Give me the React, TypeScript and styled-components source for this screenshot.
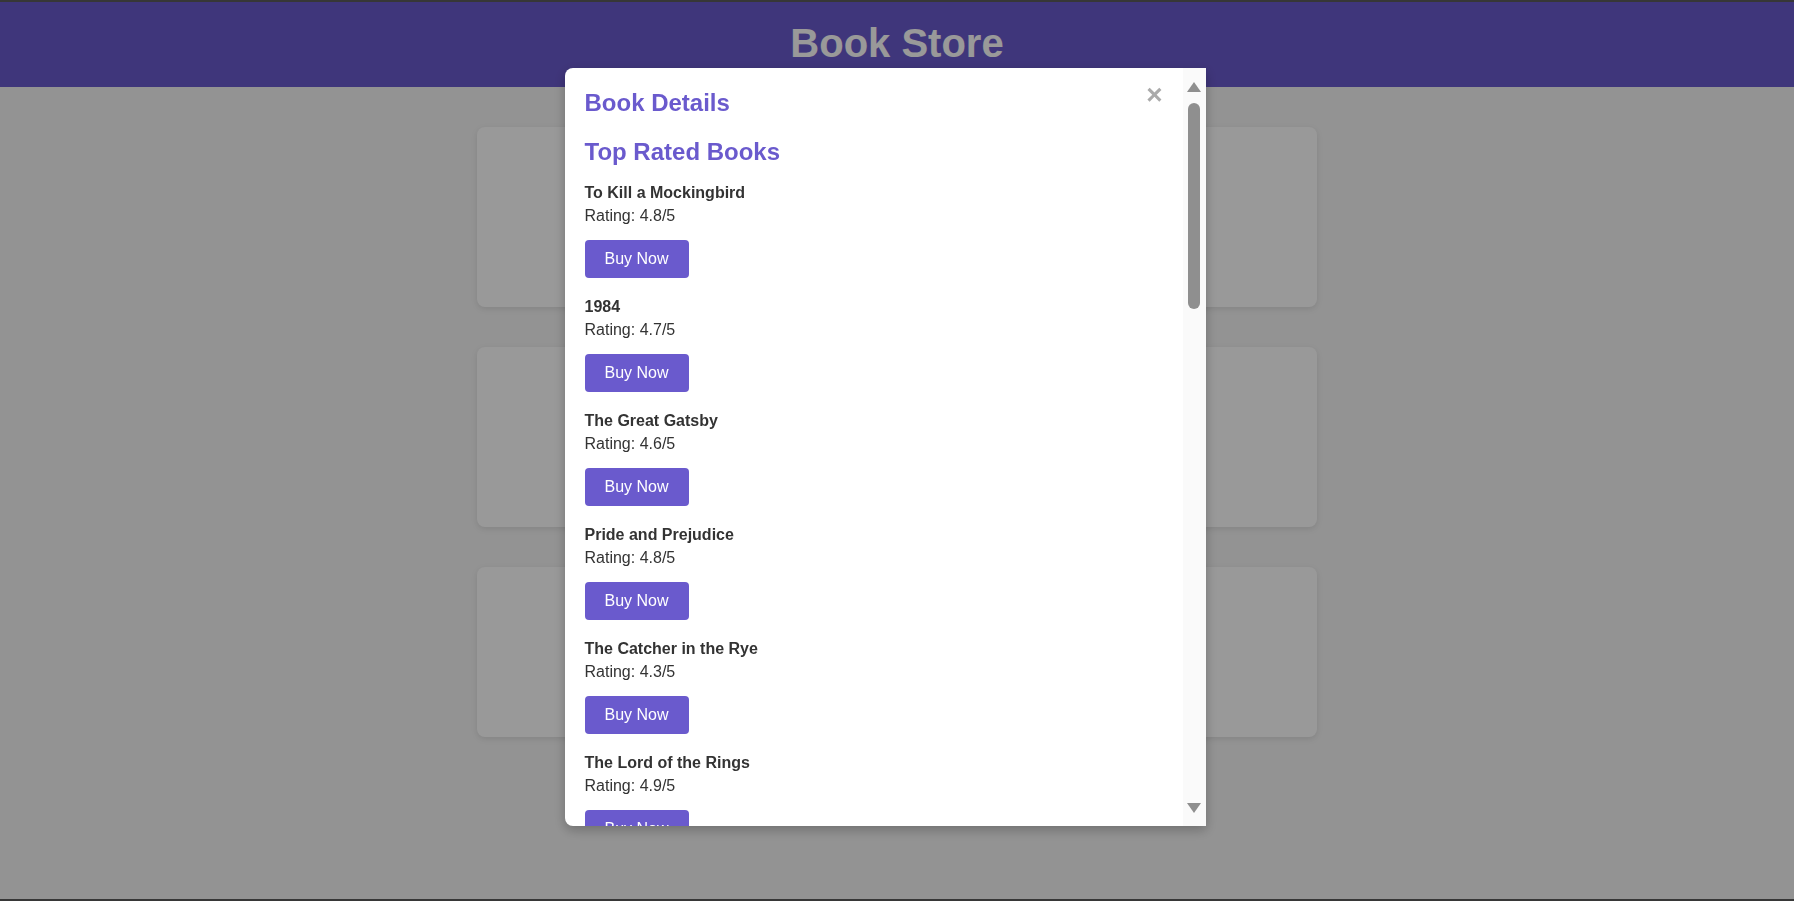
import styled, { createGlobalStyle } from 'styled-components'

type Book = {
  title: string
  rating: number
}

type Featured = {
  title: string
  author: string
  price: string
  compact?: boolean
}

const TOP_RATED: Book[] = [
  { title: 'To Kill a Mockingbird', rating: 4.8 },
  { title: '1984', rating: 4.7 },
  { title: 'The Great Gatsby', rating: 4.6 },
  { title: 'Pride and Prejudice', rating: 4.8 },
  { title: 'The Catcher in the Rye', rating: 4.3 },
  { title: 'The Lord of the Rings', rating: 4.9 },
  { title: "Harry Potter and the Sorcerer's Stone", rating: 4.7 },
  { title: 'The Hobbit', rating: 4.7 },
  { title: 'Jane Eyre', rating: 4.5 },
  { title: 'Brave New World', rating: 4.4 },
]

const FEATURED: Featured[] = [
  { title: 'Fiction', author: 'Classic novels', price: 'From $9.99' },
  { title: 'Science', author: 'Popular science', price: 'From $12.99' },
  { title: 'History', author: 'World history', price: 'From $10.99', compact: true },
]

const GlobalStyle = createGlobalStyle`
  html {
    background: #5d5d5d;
  }

  body {
    margin: 2px 0;
    min-height: calc(100vh - 4px);
    background: #f5f5f5;
    font-family: 'Liberation Sans', Arial, sans-serif;
    color: #333;
  }
`

export default function App() {
  return (
    <>
      <GlobalStyle />
      <Header>
        <Title>Book Store</Title>
      </Header>

      <Shelf>
        {FEATURED.map((item) => (
          <Card key={item.title} $compact={item.compact}>
            <CardTitle>{item.title}</CardTitle>
            <CardText>{item.author}</CardText>
            <CardText>{item.price}</CardText>
            <BuyButton>Browse</BuyButton>
          </Card>
        ))}
      </Shelf>

      <Overlay>
        <Modal>
          <ScrollArea>
            <CloseButton aria-label="Close">×</CloseButton>
            <ModalTitle>Book Details</ModalTitle>
            <SectionTitle>Top Rated Books</SectionTitle>

            {TOP_RATED.map((book) => (
              <BookItem key={book.title}>
                <BookName>{book.title}</BookName>
                <Rating>Rating: {book.rating}/5</Rating>
                <BuyButton>Buy Now</BuyButton>
              </BookItem>
            ))}
          </ScrollArea>

          {/* headless capture hides native scrollbars, so the bar is drawn */}
          <ScrollBar>
            <Arrow $dir="up" />
            <Thumb />
            <Arrow $dir="down" />
          </ScrollBar>
        </Modal>
      </Overlay>
    </>
  )
}

const Header = styled.header`
  background: #6a5acd;
  padding: 19px 0 21px;
  text-align: center;
`

const Title = styled.h1`
  margin: 0;
  font-size: 40px;
  font-weight: 700;
  color: #fff;
`

const Shelf = styled.main`
  width: 840px;
  margin: 40px auto;
  display: flex;
  flex-direction: column;
  gap: 40px;
`

const Card = styled.section<{ $compact?: boolean }>`
  background: #fff;
  border-radius: 8px;
  box-shadow: 0 2px 6px rgba(0, 0, 0, 0.1);
  padding: 22px 20px ${(p) => (p.$compact ? '12px' : '22px')};
  text-align: center;
`

const CardTitle = styled.h2`
  margin: 0 0 12px;
  font-size: 22px;
  color: #333;
`

const CardText = styled.p`
  margin: 0 0 12px;
  font-size: 16px;
`

const Overlay = styled.div`
  position: fixed;
  inset: 0;
  background: rgba(0, 0, 0, 0.4);
  display: flex;
  align-items: center;
  justify-content: center;
  padding: 0 24px 7px 0;
`

const Modal = styled.div`
  display: flex;
  width: 641px;
  height: 758px;
  background: #fff;
  border-radius: 8px 0 0 8px;
  box-shadow: 0 4px 12px rgba(0, 0, 0, 0.25);
  overflow: hidden;
`

const ScrollArea = styled.div`
  position: relative;
  flex: 1;
  min-width: 0;
  padding: 21px 20px 20px;
  overflow: hidden;
`

const ScrollBar = styled.div`
  width: 23px;
  flex-shrink: 0;
  background: #fafafa;
  display: flex;
  flex-direction: column;
  align-items: center;
  padding: 14px 0 13px;
  box-sizing: border-box;
`

const Arrow = styled.span<{ $dir: 'up' | 'down' }>`
  width: 0;
  height: 0;
  border-left: 7px solid transparent;
  border-right: 7px solid transparent;
  ${(p) =>
    p.$dir === 'up'
      ? 'border-bottom: 10px solid #8f8f8f;'
      : 'border-top: 10px solid #8f8f8f; margin-top: auto;'}
`

const Thumb = styled.span`
  width: 12px;
  height: 206px;
  margin-top: 11px;
  border-radius: 6px;
  background: #8f8f8f;
`

const CloseButton = styled.span`
  position: absolute;
  top: 11px;
  right: 20px;
  font-size: 28px;
  font-weight: 700;
  color: #aaa;
  cursor: pointer;
`

const ModalTitle = styled.h2`
  margin: 0 0 21px;
  font-size: 24px;
  font-weight: 700;
  color: #6a5acd;
`

const SectionTitle = styled(ModalTitle)`
  margin-bottom: 18px;
`

const BookItem = styled.div`
  margin-bottom: 20px;
`

const BookName = styled.h3`
  margin: 0 0 5px;
  font-size: 16px;
  line-height: 18px;
  font-weight: 700;
  color: #333;
`

const Rating = styled.p`
  margin: 0 0 15px;
  font-size: 16px;
  line-height: 18px;
  color: #333;
`

const BuyButton = styled.button`
  display: inline-block;
  padding: 10px 20px;
  border: none;
  border-radius: 4px;
  background: #6a5acd;
  color: #fff;
  font-family: 'Liberation Sans', Arial, sans-serif;
  font-size: 16px;
  line-height: 18px;
  cursor: pointer;
`
